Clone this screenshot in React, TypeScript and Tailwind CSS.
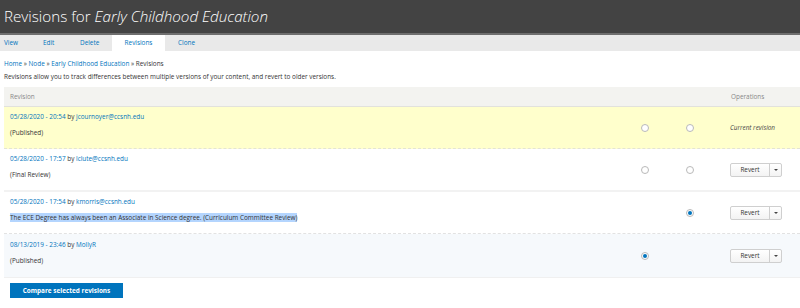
import React from "react";

const font = { fontFamily: '"Open Sans", "Noto Sans", sans-serif' };

function Radio({ checked }: { checked?: boolean }) {
  return (
    <span className="inline-flex h-[8px] w-[8px] items-center justify-center rounded-full border border-[#b9b9b9] bg-white">
      {checked && <span className="h-[4px] w-[4px] rounded-full bg-[#0074bd]" />}
    </span>
  );
}

function Revert() {
  return (
    <div className="flex h-[14px] w-[52px] rounded-[2px] border border-[#cfcfcf] bg-gradient-to-b from-white to-[#f3f3f3] text-[6.4px] text-[#333]">
      <div className="flex flex-1 items-center justify-center">Revert</div>
      <div className="flex w-[12px] items-center justify-center border-l border-[#cfcfcf]">
        <span className="h-0 w-0 border-x-[2px] border-t-[2.5px] border-x-transparent border-t-[#444]" />
      </div>
    </div>
  );
}

type Row = {
  date: string;
  user: string;
  note: string;
  bg: string;
  r1: "on" | "off" | "none";
  r2: "on" | "off" | "none";
  current?: boolean;
  selected?: boolean;
  border: string;
  pad: string;
};

const rows: Row[] = [
  { date: "05/28/2020 - 20:54", user: "jcournoyer@ccsnh.edu", note: "(Published)", bg: "bg-[#ffffcc]", r1: "off", r2: "off", current: true, border: "border-b border-dashed border-[#e4e4d4]", pad: "pt-[5px] pb-[10px]" },
  { date: "05/28/2020 - 17:57", user: "lclute@ccsnh.edu", note: "(Final Review)", bg: "bg-white", r1: "off", r2: "off", border: "border-b-2 border-[#f2f2f2]", pad: "pt-[5px] pb-[10px]" },
  { date: "05/28/2020 - 17:54", user: "kmorris@ccsnh.edu", note: "The ECE Degree has always been an Associate in Science degree. (Curriculum Committee Review)", bg: "bg-white", r1: "none", r2: "on", selected: true, border: "border-b border-dashed border-[#e2e2e2]", pad: "pt-[5px] pb-[10px]" },
  { date: "08/13/2019 - 23:46", user: "MollyR", note: "(Published)", bg: "bg-[#f6f9fc]", r1: "on", r2: "none", border: "border-b border-[#f0f0f0]", pad: "pt-[6px] pb-[11px]" },
];

export default function App() {
  return (
    <div className="h-[308px] w-[800px] overflow-hidden bg-white text-[#333]" style={font}>
      <div className="flex h-[33px] items-center bg-[#434343] pl-[4px] text-[15.2px] font-light text-white">
        <span>Revisions for&nbsp;</span>
        <em>Early Childhood Education</em>
      </div>
      <div className="h-[2px] bg-[#6e6e6e]" />
      <div className="flex h-[16px] items-stretch bg-[#e9e9e9] text-[6.4px] text-[#0074bd]">
        <div className="flex w-[43px] items-center pl-[4px]">View</div>
        <div className="flex w-[37px] items-center">Edit</div>
        <div className="flex w-[32px] items-center">Delete</div>
        <div className="flex w-[53px] items-center justify-center bg-white">Revisions</div>
        <div className="flex items-center pl-[13px]">Clone</div>
      </div>
      <div className="px-[4px] pt-[8px] text-[6.4px] leading-[10px]">
        <div>
          <span className="text-[#0074bd]">Home</span> » <span className="text-[#0074bd]">Node</span> »{" "}
          <span className="text-[#0074bd]">Early Childhood Education</span> » Revisions
        </div>
        <div className="mt-[3px]">
          Revisions allow you to track differences between multiple versions of your content, and revert to older versions.
        </div>
      </div>
      <div className="ml-[4px] mt-[5px] w-[796px] text-[6.4px]">
        <div className="grid h-[20px] grid-cols-[1fr_45px_45px_88px] items-center border-b border-[#e2e2dc] bg-[#f3f3f0] text-[#888]">
          <div className="pl-[6px]">Revision</div>
          <div />
          <div />
          <div className="pl-[19px]">Operations</div>
        </div>
        {rows.map((r, i) => (
          <div key={i} className={`grid grid-cols-[1fr_45px_45px_88px] items-center ${r.bg} ${r.border}`}>
            <div className={`pl-[6px] leading-[10px] ${r.pad}`}>
              <div>
                <span className="text-[#0074bd]">{r.date}</span> by <span className="text-[#0074bd]">{r.user}</span>
              </div>
              <div className="mt-[6px]">
                <span className={r.selected ? "bg-[#b4d5fe]" : ""}>{r.note}</span>
              </div>
            </div>
            <div className="flex justify-center">{r.r1 !== "none" && <Radio checked={r.r1 === "on"} />}</div>
            <div className="flex justify-center">{r.r2 !== "none" && <Radio checked={r.r2 === "on"} />}</div>
            <div className="pl-[18px]">
              {r.current ? <em className="text-[#444]">Current revision</em> : <Revert />}
            </div>
          </div>
        ))}
        <div className="pl-[6px] pt-[5px]">
          <button className="h-[15px] w-[113px] bg-[#0074bd] text-[6.4px] font-bold text-white">
            Compare selected revisions
          </button>
        </div>
      </div>
    </div>
  );
}
